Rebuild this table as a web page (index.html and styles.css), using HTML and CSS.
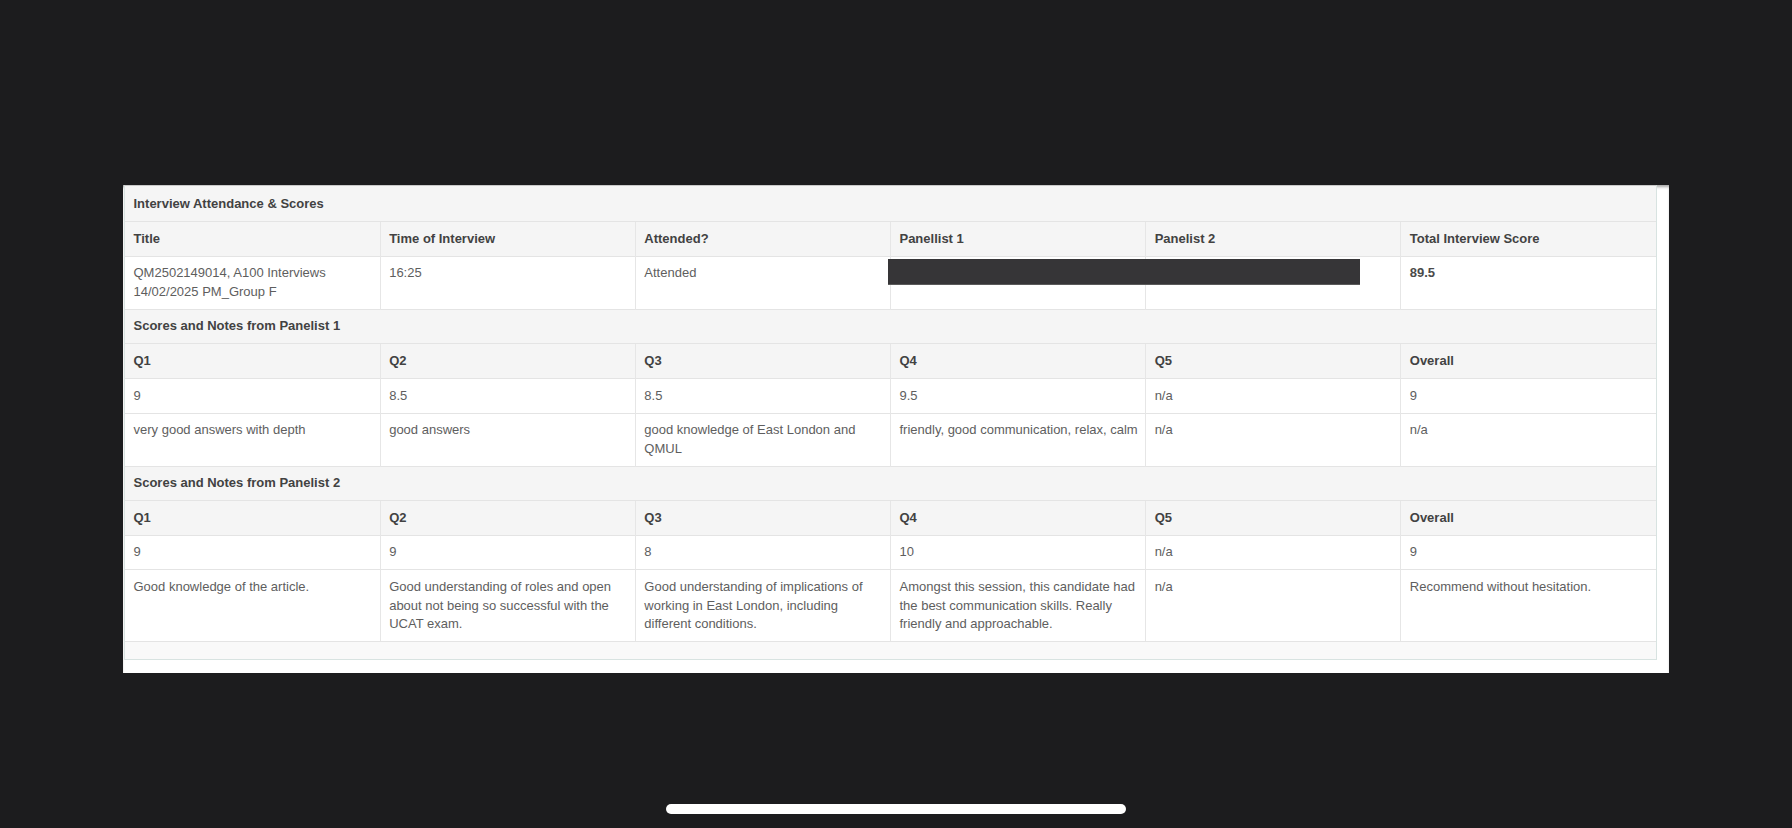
FILE: index.html
```html
<!DOCTYPE html>
<html lang="en">
<head>
<meta charset="utf-8">
<title>Interview Attendance &amp; Scores</title>
<link rel="stylesheet" href="styles.css">
</head>
<body>
<div class="screen">
  <div class="frame">
    <div class="panel">
      <table class="scores">
        <colgroup><col><col><col><col><col><col></colgroup>
        <tr class="section"><td colspan="6">Interview Attendance &amp; Scores</td></tr>
        <tr class="head">
          <th>Title</th><th>Time of Interview</th><th>Attended?</th><th>Panellist 1</th><th>Panelist 2</th><th>Total Interview Score</th>
        </tr>
        <tr class="data">
          <td>QM2502149014, A100 Interviews 14/02/2025 PM_Group F</td>
          <td>16:25</td>
          <td>Attended</td>
          <td class="redacted-cell"><span class="redaction"></span></td>
          <td></td>
          <td class="strong">89.5</td>
        </tr>
        <tr class="section"><td colspan="6">Scores and Notes from Panelist 1</td></tr>
        <tr class="head"><th>Q1</th><th>Q2</th><th>Q3</th><th>Q4</th><th>Q5</th><th>Overall</th></tr>
        <tr class="data"><td>9</td><td>8.5</td><td>8.5</td><td>9.5</td><td>n/a</td><td>9</td></tr>
        <tr class="data">
          <td>very good answers with depth</td>
          <td>good answers</td>
          <td>good knowledge of East London and QMUL</td>
          <td>friendly, good communication, relax, calm</td>
          <td>n/a</td>
          <td>n/a</td>
        </tr>
        <tr class="section"><td colspan="6">Scores and Notes from Panelist 2</td></tr>
        <tr class="head"><th>Q1</th><th>Q2</th><th>Q3</th><th>Q4</th><th>Q5</th><th>Overall</th></tr>
        <tr class="data"><td>9</td><td>9</td><td>8</td><td>10</td><td>n/a</td><td>9</td></tr>
        <tr class="data">
          <td>Good knowledge of the article.</td>
          <td>Good understanding of roles and open about not being so successful with the UCAT exam.</td>
          <td>Good understanding of implications of working in East London, including different conditions.</td>
          <td>Amongst this session, this candidate had the best communication skills. Really friendly and approachable.</td>
          <td>n/a</td>
          <td>Recommend without hesitation.</td>
        </tr>
      </table>
      <div class="panel-foot"></div>
    </div>
  </div>
  <div class="home-bar"></div>
</div>
</body>
</html>
```
FILE: styles.css
```css
html, body {
  margin: 0;
  padding: 0;
  background: #1c1c1e;
}

.screen {
  width: 1792px;
  height: 828px;
  overflow: hidden;
  display: flex;
  flex-direction: column;
  align-items: center;
  font-family: "Liberation Sans", Arial, sans-serif;
}

.frame {
  margin-top: 185px;
  width: 1546px;
  box-sizing: border-box;
  padding: 0 12px 13px 1px;
  background: #ffffff;
  box-shadow: inset 0 3px 3px -1px rgba(0, 0, 0, 0.35);
}

.panel {
  border: 1px solid #d8e3e1;
  border-top-color: #c9c9c9;
  background: #f8f8f8;
}

.scores {
  width: 1531px;
  table-layout: fixed;
  border-collapse: collapse;
  font-size: 13px;
  line-height: 18.5px;
  color: #5e5e5e;
}

.scores td,
.scores th {
  padding: 7.6px 5px 7.5px 8.5px;
  text-align: left;
  vertical-align: top;
  border-top: 1px solid #e4e4e4;
  overflow-wrap: break-word;
}

.scores tr:first-child td {
  border-top: none;
  padding-top: 9px;
  padding-bottom: 7.6px;
}

.scores th + th,
.scores td + td {
  border-left: 1px solid #e6e6e6;
}

.section td {
  background: #f5f5f5;
  color: #424242;
  font-weight: bold;
}

.head th {
  background: #f5f5f5;
  color: #424242;
  font-weight: bold;
}

.data td {
  background: #ffffff;
}

.strong {
  font-weight: bold;
  color: #4a4a4a;
}

.redacted-cell {
  position: relative;
}

.redaction {
  position: absolute;
  left: -3px;
  top: 2px;
  width: 472px;
  height: 25px;
  background: #363537;
  border-bottom: 1px solid #5a5a5a;
}

.panel-foot {
  height: 17px;
  border-top: 1px solid #e4e4e4;
  background: #f9f9f9;
}

.home-bar {
  margin-top: 131px;
  width: 460px;
  height: 10px;
  border-radius: 5px;
  background: #ffffff;
}
```
